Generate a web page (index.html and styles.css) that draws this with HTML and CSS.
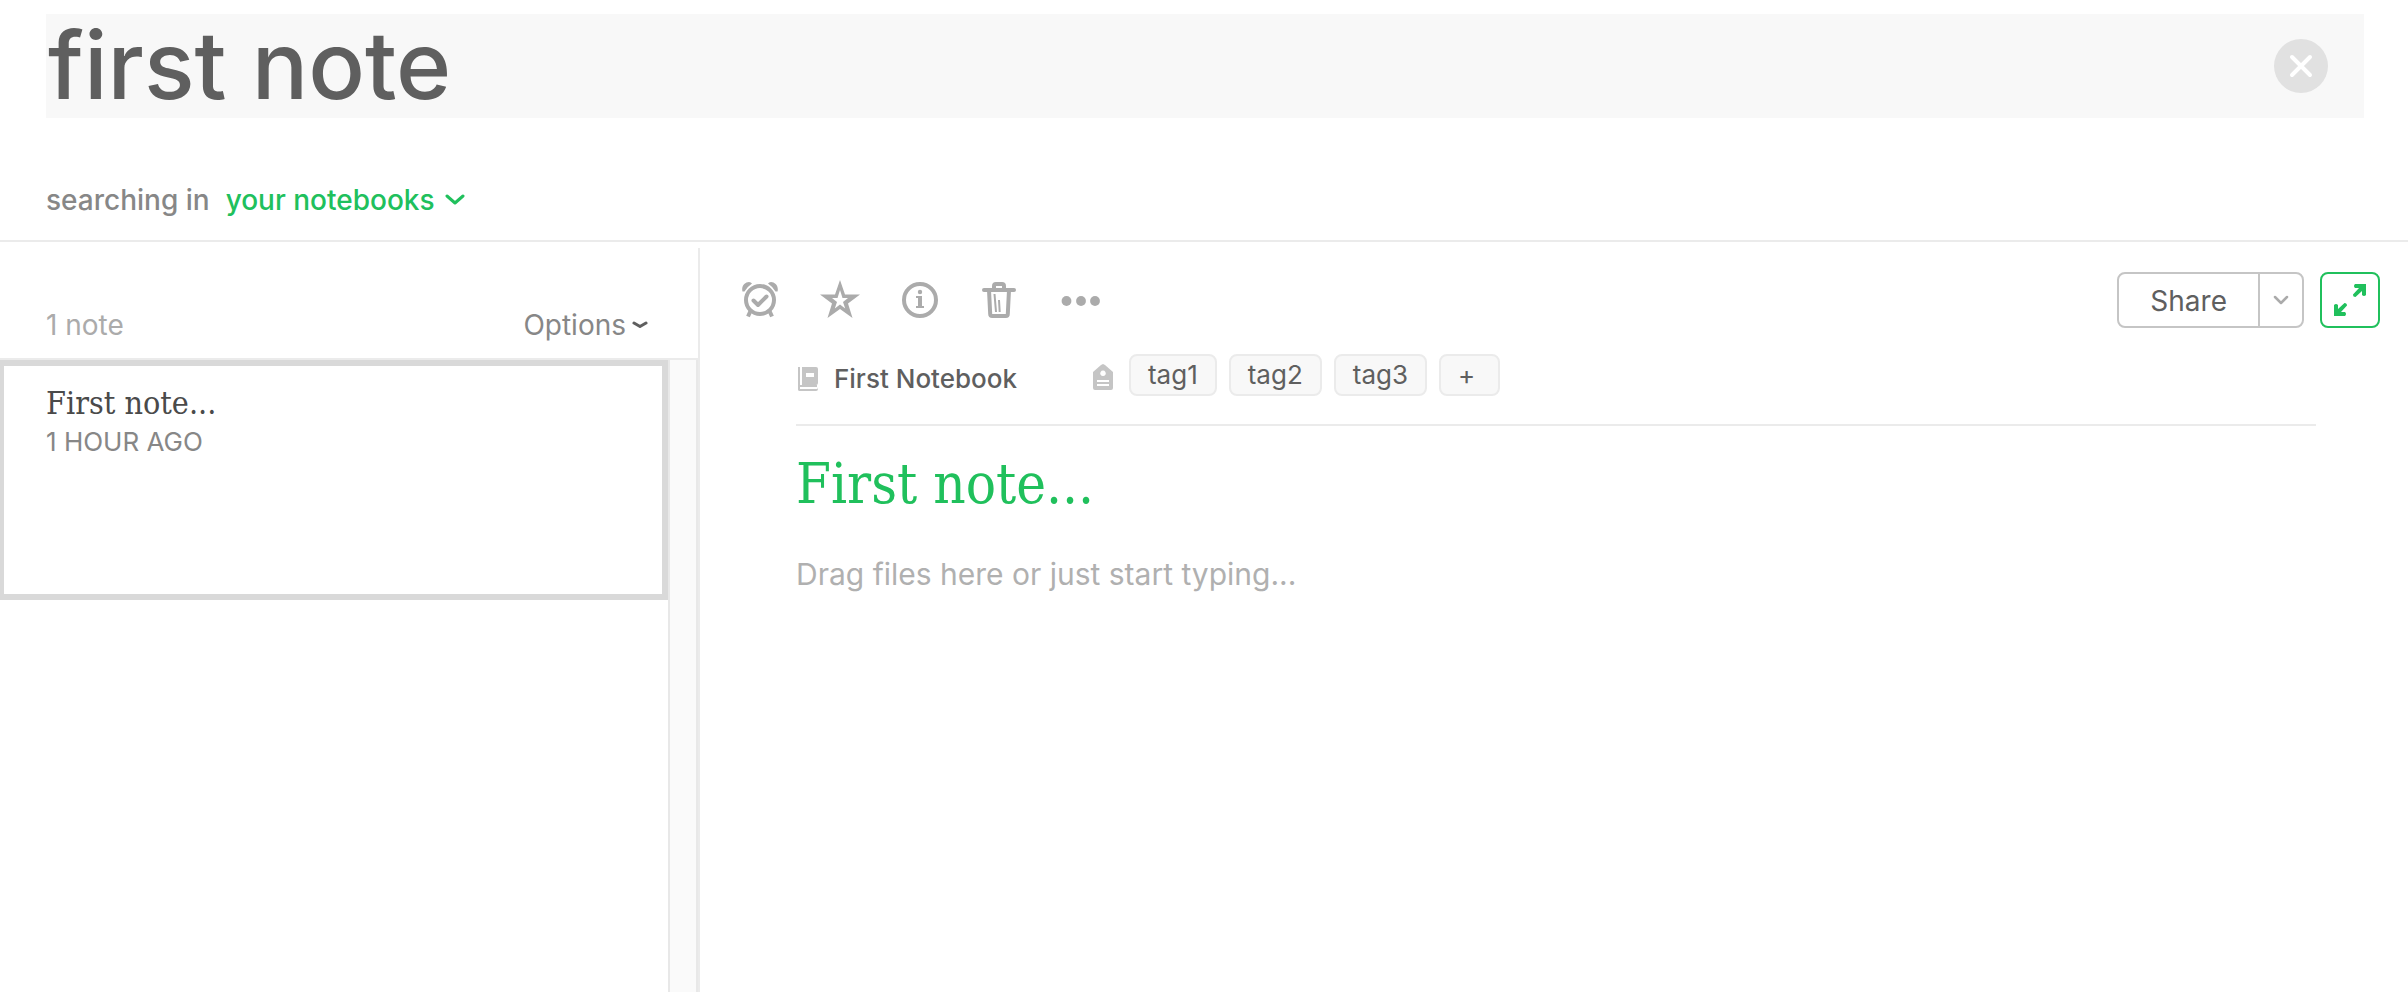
FILE: index.html
```html
<!DOCTYPE html>
<html lang="en">
<head>
<meta charset="utf-8">
<meta name="viewport" content="width=device-width, initial-scale=1">
<title>Notes search</title>
<link rel="stylesheet" href="styles.css">
</head>
<body>
<header class="search">
  <form class="search-bar" role="search">
    <input class="search-input" type="text" value="first note" aria-label="Search notes">
    <button class="clear" type="button" aria-label="Clear search">
      <svg width="54" height="54" viewBox="0 0 54 54"><circle cx="27" cy="27" r="27" fill="#e1e1e1"/><path d="M18 18l18 18M36 18L18 36" stroke="#fff" stroke-width="4" stroke-linecap="round"/></svg>
    </button>
  </form>
  <div class="scope">
    <label class="scope-label" for="scope">searching in</label>
    <select class="scope-select" id="scope"><option>your notebooks</option></select>
    <svg class="scope-arrow" width="20" height="12" viewBox="0 0 20 12" fill="none"><path d="M2 2l8 7 8-7" stroke="#20c05c" stroke-width="3" stroke-linecap="round" stroke-linejoin="round"/></svg>
  </div>
</header>
<div class="workspace">
  <aside class="sidebar">
    <div class="list-head">
      <span class="count">1 note</span>
      <button class="options" type="button" aria-haspopup="menu">Options
        <svg width="16" height="8" viewBox="0 0 16 8" fill="none"><path d="M2 2l6 3.500 6-3.500" stroke="#5f5f5f" stroke-width="3" stroke-linecap="round" stroke-linejoin="round"/></svg>
      </button>
    </div>
    <div class="list-body">
      <div class="list">
        <article class="card">
          <h2 class="card-title">First note...</h2>
          <p class="card-date">1 HOUR AGO</p>
        </article>
      </div>
      <div class="track"></div>
    </div>
  </aside>
  <main class="note">
    <div class="toolbar">
      <div class="tools">
        <button class="tool" type="button" aria-label="Reminder">
          <svg width="40" height="40" viewBox="0 0 40 40" fill="none" stroke="#ababab"><circle cx="20" cy="20" r="14" stroke-width="4"/><path d="M13.500 20.500l4.500 4.500 8.500-8.500" stroke-width="4" stroke-linecap="round" stroke-linejoin="round"/><path d="M10.500 31l-2.500 5.500M29.500 31l2.500 5.500" stroke-width="4"/><path d="M2.500 11.500C1 6 5 2 9 2q2 0 3 1.500Q7.500 6.500 4.500 11.500zM37.500 11.500C39 6 35 2 31 2q-2 0-3 1.500q4.500 3 7.500 8z" fill="#ababab" stroke="none"/></svg>
        </button>
        <button class="tool" type="button" aria-label="Shortcut">
          <svg width="40" height="40" viewBox="0 0 40 40"><path fill="#ababab" fill-rule="evenodd" d="M20 0l5 14.500h15L28 23.500l4.500 14.500L20 29 7.500 38 12 23.500 0 14.500h15zM20 10l-2.500 8H12l5 4-2.200 6.500 5.200-4 5.200 4-2.200-6.500 5-4h-5.500z"/></svg>
        </button>
        <button class="tool" type="button" aria-label="Note info">
          <svg width="40" height="40" viewBox="0 0 40 40"><circle cx="20" cy="20" r="16" fill="none" stroke="#ababab" stroke-width="4"/><circle cx="20" cy="12" r="2.200" fill="#ababab"/><path fill="#ababab" d="M16 16h6v10h2v2h-8v-2h2v-8h-2z"/></svg>
        </button>
        <button class="tool" type="button" aria-label="Delete note">
          <svg width="40" height="40" viewBox="0 0 40 40" fill="none" stroke="#ababab"><path d="M4 10h30" stroke-width="4" stroke-linecap="round"/><path d="M14 10V6q0-2 2-2h6q2 0 2 2v4" stroke-width="4"/><path d="M9 10l1.200 24q0 2 2 2h13.600q2 0 2-2L29 10" stroke-width="4"/><path d="M14.500 14l1.500 18M19 20l.7 12" stroke-width="2"/></svg>
        </button>
        <button class="tool" type="button" aria-label="More actions">
          <svg width="40" height="40" viewBox="0 0 40 40" fill="#ababab"><circle cx="6.500" cy="21" r="4.900"/><circle cx="21" cy="21" r="4.900"/><circle cx="35" cy="21" r="4.900"/></svg>
        </button>
      </div>
      <div class="actions">
        <div class="share">
          <button class="share-main" type="button">Share</button>
          <button class="share-more" type="button" aria-label="Share options">
            <svg width="16" height="10" viewBox="0 0 16 10" fill="none"><path d="M2 2l6 6 6-6" stroke="#ababab" stroke-width="2.500" stroke-linecap="round" stroke-linejoin="round"/></svg>
          </button>
        </div>
        <button class="expand" type="button" aria-label="Expand note">
          <svg width="32" height="32" viewBox="0 0 32 32"><path fill="#20c05c" d="M21 0h11v11q-2 2-4 0V7l-6.500 6q-2.500 0-2.500-2.500L25 4h-4q-2-2 0-4zM11 32H0V21q2-2 4 0v4l6.500-6q2.500 0 2.500 2.500L7 28h4q2 2 0 4z"/></svg>
        </button>
      </div>
    </div>
    <div class="content">
      <div class="meta">
        <button class="notebook" type="button">
          <svg width="20" height="24" viewBox="0 0 20 24" fill="#c5c5c5"><path d="M0 0h2v18.500q-1 .5-1 1.500h1V24q-2 0-2-2z"/><path fill-rule="evenodd" d="M4 0h14q2 0 2 2v14q0 2-2 2H4zM8 6v4h8V6z"/><path d="M0 19q0-1 2-1h17v2H2v2h17q1 0 1-2v2q0 2-2 2H2q-2 0-2-2z"/></svg>
          First Notebook
        </button>
        <div class="tags">
          <svg class="tag-icon" width="20" height="26" viewBox="0 0 20 26"><path fill="#c5c5c5" fill-rule="evenodd" d="M10 0l2 1 8 7v16q0 2-2 2H2q-2 0-2-2V8l8-7zM10 6.500a2.800 2.800 0 1 0 .010 0zM4 16v2h12v-2zM4 20v2h12v-2z"/></svg>
          <button class="tag" type="button">tag1</button>
          <button class="tag" type="button">tag2</button>
          <button class="tag" type="button">tag3</button>
          <button class="tag add" type="button" aria-label="Add tag">+</button>
        </div>
      </div>
      <input class="title" type="text" value="First note..." aria-label="Note title">
      <textarea class="body" placeholder="Drag files here or just start typing..." aria-label="Note body"></textarea>
    </div>
  </main>
</div>
</body>
</html>
```
FILE: styles.css
```css
* { box-sizing: border-box; }

body {
  margin: 0;
  min-height: 100vh;
  display: flex;
  flex-direction: column;
  background: #fff;
  color: #5f5f5f;
  font: 400 28px/32px Inter, "Liberation Sans", sans-serif;
}

button, input, select, textarea {
  margin: 0;
  padding: 0;
  border: 0;
  background: none;
  color: inherit;
  font: inherit;
  outline: none;
}

svg { display: block; flex: none; }

.search {
  padding: 14px 44px 24px 46px;
  border-bottom: 2px solid #ebebeb;
}

.search-bar {
  display: flex;
  align-items: center;
  padding-right: 36px;
  background: #f8f8f8;
}

.search-input {
  flex: 1;
  min-width: 0;
  height: 104px;
  padding: 0 0 2px 2px;
  font-size: 94px;
  font-weight: 500;
  line-height: 102px;
}

.scope {
  display: flex;
  align-items: center;
  margin-top: 66px;
  font-weight: 500;
}

.scope-label { color: #878787; }

.scope-select {
  appearance: none;
  margin: 0 10px 0 16px;
  color: #20c05c;
}

.workspace {
  flex: 1;
  display: flex;
  padding-top: 6px;
}

.sidebar {
  display: flex;
  flex-direction: column;
  width: 700px;
  border-right: 2px solid #ebebeb;
}

.list-head {
  display: flex;
  justify-content: space-between;
  padding: 61px 50px 17px 46px;
  border-bottom: 2px solid #ebebeb;
}

.count { color: #ababab; }

.options {
  display: flex;
  align-items: center;
  gap: 6px;
  color: #878787;
}

.list-body { flex: 1; display: flex; }

.list { flex: 1; }

.card {
  min-height: 240px;
  padding: 17px 40px 17px 42px;
  border: 6px solid #d9d9d9;
  border-left-width: 4px;
}

.card-title {
  margin: 0;
  color: #4a4a4a;
  font: 400 32px/40px "DejaVu Serif Condensed", "DejaVu Serif", serif;
}

.card-date {
  margin: 0;
  color: #878787;
  font-size: 26px;
  line-height: 38px;
}

.track {
  width: 30px;
  border: solid #e8e8e8;
  border-width: 0 2px;
  background: #fafafa;
}

.note { flex: 1; min-width: 0; }

.toolbar {
  display: flex;
  justify-content: space-between;
  padding: 24px 28px 0 40px;
}

.tools { display: flex; align-items: center; gap: 40px; }

.actions { display: flex; gap: 16px; }

.share {
  display: flex;
  border: 2px solid #c5c5c5;
  border-radius: 8px;
}

.share-main { padding: 11px 31px 9px; }

.share-more {
  display: grid;
  place-items: center;
  width: 44px;
  border-left: 2px solid #c5c5c5;
}

.expand {
  display: grid;
  place-items: center;
  width: 60px;
  height: 56px;
  border: 2px solid #20c05c;
  border-radius: 8px;
}

.content { padding: 26px 92px 0 96px; }

.meta {
  display: flex;
  gap: 76px;
  padding-bottom: 28px;
  border-bottom: 2px solid #ebebeb;
  font-size: 26px;
}

.notebook {
  display: flex;
  align-items: center;
  gap: 16px;
  padding: 8px 0 0 2px;
  font-weight: 500;
}

.tags { display: flex; gap: 12px; }

.tag-icon { margin: 10px 4px 0 0; }

.tag {
  padding: 3px 17px;
  border: 2px solid #ebebeb;
  border-radius: 8px;
  background: #f8f8f8;
}

.add { padding-right: 23px; }

.title {
  display: block;
  width: 100%;
  height: 64px;
  margin-top: 26px;
  color: #20c05c;
  font: 400 56px/64px "DejaVu Serif Condensed", "DejaVu Serif", serif;
}

.body {
  display: block;
  width: 100%;
  height: 240px;
  margin-top: 40px;
  font-size: 30px;
  line-height: 36px;
  resize: none;
}

.body::placeholder { color: #b0b0b0; opacity: 1; }
```
